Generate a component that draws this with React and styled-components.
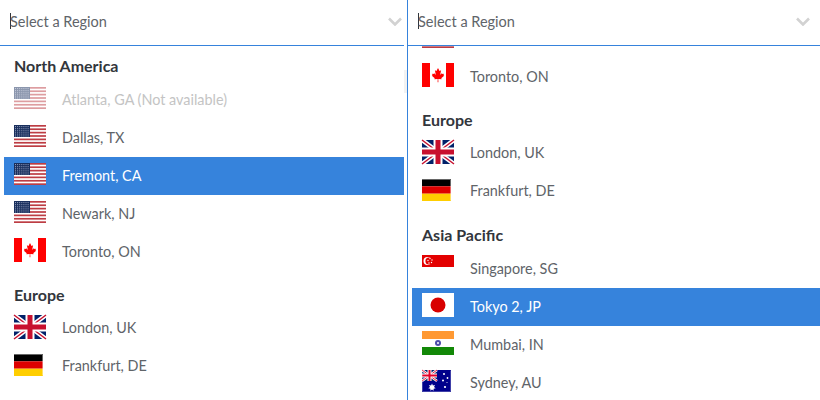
import React from 'react';
import styled, { createGlobalStyle } from 'styled-components';

const Global = createGlobalStyle`
  html, body { margin: 0; padding: 0; background: #fff; }
  body { font-family: Lato, "Noto Sans", sans-serif; width: 820px; height: 400px; overflow: hidden; }
`;

const Page = styled.div`
  display: flex;
  width: 820px;
  height: 400px;
  overflow: hidden;
`;
const Panel = styled.section`
  position: relative;
  box-sizing: border-box;
  height: 400px;
  width: ${p => p.$width}px;
  padding-right: ${p => p.$gutter}px;
  border-left: ${p => (p.$divided ? '1px solid #3683dc' : 'none')};
  display: flex;
  flex-direction: column;
`;
const Field = styled.div`
  box-sizing: border-box;
  flex: none;
  height: 46px;
  padding: 0 ${p => p.$end}px 3px 10px;
  border-bottom: 1px solid #3683dc;
  display: flex;
  align-items: center;
  justify-content: space-between;
`;
const Placeholder = styled.span`
  font-size: 14.5px;
  color: #606469;
  border-left: 1px solid #32363c;
  height: 16px;
  line-height: 18px;
  text-indent: -1px;
  display: block;
`;
const Chevron = styled.svg`
  width: 14px;
  height: 9px;
  display: block;
  margin-top: 1px;
`;
const Viewport = styled.div`
  flex: 1;
  overflow: hidden;
  padding-left: 4px;
`;
const Scroller = styled.div`
  margin-top: ${p => -p.$offset}px;
`;
const GroupTitle = styled.div`
  box-sizing: border-box;
  height: ${p => p.$height}px;
  padding: 0 0 ${p => p.$pad}px 10px;
  display: flex;
  align-items: flex-end;
  font-size: 16px;
  line-height: 20px;
  font-weight: 700;
  color: #32363c;
`;
const Row = styled.div`
  box-sizing: border-box;
  height: 38px;
  padding: 0 0 2px 10px;
  display: flex;
  align-items: center;
  font-size: 14.4px;
  background: ${p => (p.$selected ? '#3683dc' : 'transparent')};
  color: ${p => (p.$selected ? '#fff' : p.$disabled ? '#c4c4c4' : '#606469')};
`;
const FlagSlot = styled.svg`
  flex: none;
  display: block;
  width: 32px;
  height: 24px;
  margin-right: 16px;
  margin-bottom: 2px;
  overflow: visible;
  opacity: ${p => (p.$faded ? 0.5 : 1)};
`;
const Thumb = styled.div`
  position: absolute;
  right: 0;
  top: 70px;
  width: 3px;
  height: 23px;
  background: #f2f2f2;
`;

const US = () => (
  <g>
    <rect x="0" y="1" width="32" height="22" fill="#fff" />
    {[0, 2, 4, 6, 8, 10, 12].map(i => (
      <rect key={i} x="0" y={1 + (i * 22) / 13} width="32" height={22 / 13} fill="#bd3d44" />
    ))}
    <rect x="0" y="1" width="16" height="12" fill="#192f5d" />
    {[0, 1, 2, 3, 4, 5].map(r =>
      [0, 1, 2, 3, 4, 5, 6].map(c => (
        <rect key={`${r}-${c}`} x={1 + c * 2.1} y={2 + r * 1.9} width="1" height="1" fill="#8f9ab8" />
      ))
    )}
  </g>
);
const CA = () => (
  <g>
    <rect width="32" height="24" fill="#fff" />
    <rect width="8" height="24" fill="#f00" />
    <rect x="24" width="8" height="24" fill="#f00" />
    <path
      d="M16 5l-1.400 2.700c-.2.300-.4.300-.7.100l-1-.5.800 3.900c.1.500-.3.500-.5.200l-1.200-1.300-.2.700c0 .2-.2.300-.4.200l-1.300-.3.300 1.300c.1.300.2.400-.1.600l-.5.200 2.700 2.200c.1.100.2.300.1.500l-.2.800 2.900-.3c.2 0 .4.100.4.300l-.1 2.900h.8l-.1-2.900c0-.2.2-.3.400-.3l2.900.3-.2-.8c-.1-.2 0-.4.100-.5l2.700-2.200-.5-.2c-.3-.2-.2-.3-.1-.6l.3-1.300-1.300.3c-.2.100-.4 0-.4-.2l-.2-.7-1.200 1.300c-.2.300-.6.300-.5-.2l.8-3.900-1 .5c-.3.200-.5.200-.7-.1z"
      fill="#f00"
    />
  </g>
);
const GB = () => (
  <g>
    <rect width="32" height="24" y="1" fill="#012169" />
    <path d="M0 1l32 24M32 1L0 25" stroke="#fff" strokeWidth="4.500" />
    <path d="M0 1l32 24M32 1L0 25" stroke="#c8102e" strokeWidth="1.500" />
    <rect x="11.500" y="1" width="9" height="24" fill="#fff" />
    <rect y="8.500" width="32" height="9" fill="#fff" />
    <rect x="13.500" y="1" width="5" height="24" fill="#c8102e" />
    <rect y="10.500" width="32" height="5" fill="#c8102e" />
  </g>
);
const DE = () => (
  <g>
    <rect y="2" width="29" height="7.300" fill="#000" />
    <rect y="9.300" width="29" height="7.400" fill="#d00" />
    <rect y="16.700" width="29" height="7.300" fill="#ffce00" />
    <path d="M0 2.500h28.500v21" fill="none" stroke="#fff" strokeOpacity=".4" />
  </g>
);
const SG = () => (
  <g>
    <rect width="32" height="12" fill="#e30000" />
    <circle cx="5.500" cy="6" r="4" fill="#fff" />
    <circle cx="7" cy="6" r="3.600" fill="#e30000" />
    <circle cx="8" cy="3.500" r=".7" fill="#fff" />
    <circle cx="10" cy="5" r=".7" fill="#fff" />
    <circle cx="9.500" cy="7.500" r=".7" fill="#fff" />
    <circle cx="7" cy="8" r=".7" fill="#fff" />
    <circle cx="6" cy="5.500" r=".7" fill="#fff" />
  </g>
);
const JP = () => (
  <g>
    <rect width="32" height="24" fill="#fff" />
    <circle cx="16" cy="12" r="7.500" fill="#d80000" />
  </g>
);
const IN = () => (
  <g>
    <rect width="32" height="8" fill="#f93" />
    <rect y="8" width="32" height="8" fill="#fff" />
    <rect y="16" width="32" height="8" fill="#128807" />
    <circle cx="16" cy="12" r="3" fill="#008" fillOpacity=".7" />
    <circle cx="16" cy="12" r="1" fill="#fff" />
  </g>
);
const AU = () => (
  <g>
    <rect y="1" width="29" height="22" fill="#00008b" />
    <rect x="0" y="1" width="15" height="11" fill="#012169" />
    <path d="M0 1l15 11M15 1L0 12" stroke="#fff" strokeWidth="2.400" />
    <path d="M0 1l15 11M15 1L0 12" stroke="#e4002b" strokeWidth=".9" />
    <rect x="5.500" y="1" width="4" height="11" fill="#fff" />
    <rect y="4.500" width="15" height="4" fill="#fff" />
    <rect x="6.500" y="1" width="2" height="11" fill="#e4002b" />
    <rect y="5.500" width="15" height="2" fill="#e4002b" />
    <path d="M10 14.500l.9 2 2.100-.5-1 1.900 1.700 1.400-2.100.4 0 2.100-1.600-1.400-1.600 1.400 0-2.100-2.100-.4 1.700-1.400-1-1.900 2.100.5z" fill="#fff" />
    {[[22, 5, 1], [25.500, 9, 0.9], [21, 11.500, 1], [23, 18, 1.100], [25, 13.500, 0.500]].map(([cx, cy, r]) => (
      <circle key={`${cx}`} cx={cx} cy={cy} r={r} fill="#fff" />
    ))}
    <path d="M.5 1.500v21h28v-21" fill="none" stroke="#fff" strokeOpacity=".25" />
  </g>
);

const FLAGS = { us: US, ca: CA, gb: GB, de: DE, sg: SG, jp: JP, in: IN, au: AU };

const Flag = ({ code, faded }) => {
  const Art = FLAGS[code];
  return (
    <FlagSlot viewBox="0 0 32 24" $faded={faded}>
      <Art />
    </FlagSlot>
  );
};

const GROUPS = [
  {
    title: 'North America',
    height: 35,
    pad: 5,
    items: [
      { code: 'us', label: 'Atlanta, GA (Not available)', disabled: true },
      { code: 'us', label: 'Dallas, TX' },
      { code: 'us', label: 'Fremont, CA' },
      { code: 'us', label: 'Newark, NJ' },
      { code: 'ca', label: 'Toronto, ON' },
    ],
  },
  {
    title: 'Europe',
    height: 38,
    pad: 4,
    items: [
      { code: 'gb', label: 'London, UK' },
      { code: 'de', label: 'Frankfurt, DE' },
    ],
  },
  {
    title: 'Asia Pacific',
    height: 40,
    pad: 5,
    items: [
      { code: 'sg', label: 'Singapore, SG' },
      { code: 'jp', label: 'Tokyo 2, JP' },
      { code: 'in', label: 'Mumbai, IN' },
      { code: 'au', label: 'Sydney, AU' },
    ],
  },
];

const Select = ({ selected, offset, width, gutter, divided, end, thumb }) => (
  <Panel $width={width} $gutter={gutter} $divided={divided}>
    <Field $end={end}>
      <Placeholder>Select a Region</Placeholder>
      <Chevron viewBox="0 0 14 9">
        <path d="M1 1.500L7 7.500l6-6" fill="none" stroke="#d2d2d2" strokeWidth="2.600" />
      </Chevron>
    </Field>
    <Viewport>
      <Scroller $offset={offset}>
        {GROUPS.map(g => (
          <div key={g.title}>
            <GroupTitle $height={g.height} $pad={g.pad}>{g.title}</GroupTitle>
            {g.items.map(it => (
              <Row key={it.label} $selected={it.label === selected} $disabled={it.disabled}>
                <Flag code={it.code} faded={it.disabled} />
                {it.label}
              </Row>
            ))}
          </div>
        ))}
      </Scroller>
    </Viewport>
    {thumb && <Thumb />}
  </Panel>
);

export default function App() {
  return (
    <Page>
      <Global />
      <Select selected="Fremont, CA" offset={0} width={407} gutter={3} end={2} thumb />
      <Select selected="Tokyo 2, JP" offset={175} width={413} gutter={0} end={10} divided />
    </Page>
  );
}
